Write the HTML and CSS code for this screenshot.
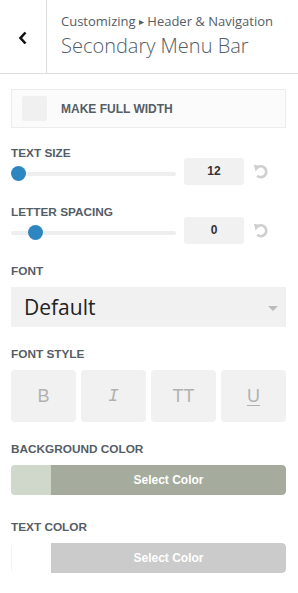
FILE: index.html
```html
<!DOCTYPE html>
<html lang="en">
<head>
  <meta charset="UTF-8" />
  <meta name="viewport" content="width=device-width, initial-scale=1.0"/>
  <title>Secondary Menu Bar</title>
  <link rel="stylesheet" href="styles.css">
</head>
<body>
  <!-- Section header -->
  <div class="header">
    <button class="back" aria-label="Back">
      <svg width="10" height="14" viewBox="0 0 10 14"><path d="M7.5 1.5 L2.5 7 L7.5 12.5" fill="none" stroke="#111" stroke-width="2.6"/></svg>
    </button>
    <div class="titles">
      <div class="crumb">Customizing <span class="caret">&#9656;</span> Header &amp; Navigation</div>
      <h1>Secondary Menu Bar</h1>
    </div>
  </div>

  <div class="panel">
    <!-- Full width toggle -->
    <label class="checkbox">
      <span class="box"></span>
      <span class="check-label">Make Full Width</span>
    </label>

    <!-- Text size -->
    <div class="field slider-field first">
      <div class="label">Text Size</div>
      <div class="slider-row">
        <div class="track"><span class="thumb" style="left:0px"></span></div>
        <div class="num">12</div>
        <span class="reset">
          <svg width="16" height="16" viewBox="0 0 16 16"><path d="M4.2 4.8 A5.4 5.4 0 1 1 4.2 12.8" fill="none" stroke="#cfcfcf" stroke-width="2.8"/><path d="M0.8 1.8 L7.4 3 L2.6 8.4 Z" fill="#cfcfcf"/></svg>
        </span>
      </div>
    </div>

    <!-- Letter spacing -->
    <div class="field slider-field">
      <div class="label">Letter Spacing</div>
      <div class="slider-row">
        <div class="track"><span class="thumb" style="left:17px"></span></div>
        <div class="num">0</div>
        <span class="reset">
          <svg width="16" height="16" viewBox="0 0 16 16"><path d="M4.2 4.8 A5.4 5.4 0 1 1 4.2 12.8" fill="none" stroke="#cfcfcf" stroke-width="2.8"/><path d="M0.8 1.8 L7.4 3 L2.6 8.4 Z" fill="#cfcfcf"/></svg>
        </span>
      </div>
    </div>

    <!-- Font -->
    <div class="field">
      <div class="label">Font</div>
      <div class="select">
        <span>Default</span>
        <span class="arrow"></span>
      </div>
    </div>

    <!-- Font style -->
    <div class="field">
      <div class="label">Font Style</div>
      <div class="styles">
        <button class="style-btn bold">B</button>
        <button class="style-btn italic">I</button>
        <button class="style-btn">TT</button>
        <button class="style-btn under">U</button>
      </div>
    </div>

    <!-- Background color -->
    <div class="field">
      <div class="label">Background Color</div>
      <div class="color">
        <span class="swatch" style="background:#d0d8cc"></span>
        <span class="pick" style="background:#a5ab9d">Select Color</span>
      </div>
    </div>

    <!-- Text color -->
    <div class="field last">
      <div class="label">Text Color</div>
      <div class="color">
        <span class="swatch blank"></span>
        <span class="pick" style="background:#cbcbcb">Select Color</span>
      </div>
    </div>
  </div>
</body>
</html>
```

FILE: styles.css
```css
* {
  box-sizing: border-box;
  margin: 0;
  padding: 0;
}
body {
  background: #fff;
  font-family: "Liberation Sans", Arial, sans-serif;
  color: #555d66;
}

/* Header */
.header {
  display: flex;
  height: 74px;
  border-bottom: 1px solid #ddd;
}
.back {
  width: 47px;
  border: none;
  border-right: 1px solid #ddd;
  background: #fff;
  display: flex;
  align-items: center;
  justify-content: center;
  padding-top: 2px;
}
.titles {
  padding: 12px 0 0 14px;
  font-family: "Open Sans", sans-serif;
  color: #555d66;
}
.crumb {
  font-size: 13px;
  line-height: 18px;
}
.caret {
  font-size: 10px;
  position: relative;
  top: -1px;
}
h1 {
  font-size: 20px;
  font-weight: 300;
  line-height: 28px;
  margin-top: 1px;
}

/* Panel */
.panel {
  padding: 15px 12px 0 11px;
}
.checkbox {
  display: flex;
  align-items: center;
  height: 39px;
  border: 1px solid #ececec;
  background: #fbfbfb;
  padding-left: 10px;
}
.box {
  width: 25px;
  height: 25px;
  background: #f0f0f0;
  border-radius: 2px;
}
.check-label {
  margin-left: 14px;
  font-size: 12px;
  font-weight: bold;
  text-transform: uppercase;
}

.field {
  margin-top: 22px;
}
.field.first {
  margin-top: 20px;
}
.field.last {
  margin-top: 27px;
}
.label {
  font-size: 11.8px;
  line-height: 10px;
  font-weight: bold;
  text-transform: uppercase;
  margin-bottom: 11px;
}
.slider-field .label {
  margin-bottom: 0;
}

/* Sliders */
.slider-row {
  display: flex;
  align-items: flex-start;
  height: 27px;
}
.track {
  position: relative;
  width: 165px;
  height: 4px;
  margin-top: 14px;
  background: #eee;
  border-radius: 2px;
}
.thumb {
  position: absolute;
  top: -6px;
  width: 15px;
  height: 15px;
  border-radius: 50%;
  background: #2e86c1;
}
.num {
  width: 60px;
  height: 27px;
  margin-left: 8px;
  background: #f1f1f1;
  border-radius: 3px;
  text-align: center;
  line-height: 27px;
  font-size: 12px;
  font-weight: bold;
  color: #333;
}
.reset {
  margin: 5px 0 0 9px;
  display: flex;
}

/* Select */
.select {
  display: flex;
  align-items: center;
  justify-content: space-between;
  height: 40px;
  background: #f1f1f1;
  padding: 0 8px 0 13px;
  font-family: "Open Sans", sans-serif;
  font-size: 21px;
  color: #222;
}
.arrow {
  width: 0;
  height: 0;
  border-left: 5.5px solid transparent;
  border-right: 5.5px solid transparent;
  border-top: 5px solid #bbb;
  margin-top: 2px;
}

/* Font style buttons */
.styles {
  display: grid;
  grid-template-columns: repeat(4, 1fr);
  gap: 5px;
}
.style-btn {
  height: 52px;
  border: none;
  border-radius: 4px;
  background: #f1f1f1;
  color: #b1b1b1;
  font-family: "Liberation Sans", Arial, sans-serif;
  font-size: 18px;
}
.style-btn.italic {
  font-family: "Liberation Mono", monospace;
  font-style: italic;
}
.style-btn.under {
  text-decoration: underline;
  text-underline-offset: 3px;
}

/* Color pickers */
.color {
  display: flex;
  height: 30px;
  border-radius: 4px;
  overflow: hidden;
}
.swatch {
  width: 40px;
}
.swatch.blank {
  background: #fff;
  border-left: 1px solid #f2f2f2;
  border-radius: 4px 0 0 4px;
}
.pick {
  flex: 1;
  display: flex;
  align-items: center;
  justify-content: center;
  color: #fff;
  font-size: 12px;
  font-weight: bold;
  border-radius: 0 4px 4px 0;
}
```
